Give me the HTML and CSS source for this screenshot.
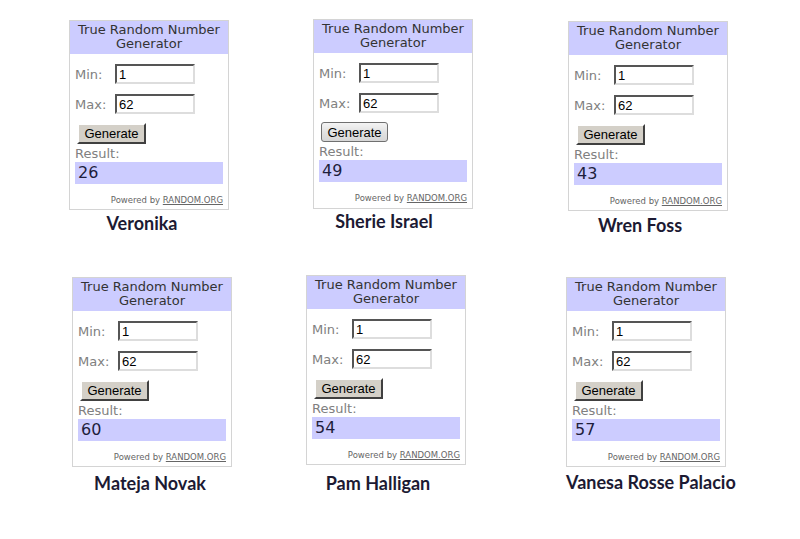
FILE: index.html
```html
<!DOCTYPE html>
<html lang="en">
<head>
    <meta charset="UTF-8">
    <title>Random Number Winners</title>
    <link rel="stylesheet" href="styles.css">
</head>
<body>

    <div class="sheet">
        <div class="row">
            <div class="entry entry-1">
                <div class="rng">
                    <div class="rng-head">True Random Number<br>Generator</div>
                    <div class="rng-body">
                        <div class="field"><span class="lbl">Min:</span><input class="num" type="text" value="1"></div>
                        <div class="field"><span class="lbl">Max:</span><input class="num" type="text" value="62"></div>
                        <button class="gen">Generate</button>
                        <div class="lbl result-lbl">Result:</div>
                        <div class="result">26</div>
                        <div class="powered">Powered by <span class="org">RANDOM.ORG</span></div>
                    </div>
                </div>
                <div class="name">Veronika</div>
            </div>

            <div class="entry entry-2">
                <div class="rng">
                    <div class="rng-head">True Random Number<br>Generator</div>
                    <div class="rng-body">
                        <div class="field"><span class="lbl">Min:</span><input class="num" type="text" value="1"></div>
                        <div class="field"><span class="lbl">Max:</span><input class="num" type="text" value="62"></div>
                        <button class="gen gen-round">Generate</button>
                        <div class="lbl result-lbl">Result:</div>
                        <div class="result">49</div>
                        <div class="powered">Powered by <span class="org">RANDOM.ORG</span></div>
                    </div>
                </div>
                <div class="name">Sherie Israel</div>
            </div>

            <div class="entry entry-3">
                <div class="rng">
                    <div class="rng-head">True Random Number<br>Generator</div>
                    <div class="rng-body">
                        <div class="field"><span class="lbl">Min:</span><input class="num" type="text" value="1"></div>
                        <div class="field"><span class="lbl">Max:</span><input class="num" type="text" value="62"></div>
                        <button class="gen">Generate</button>
                        <div class="lbl result-lbl">Result:</div>
                        <div class="result">43</div>
                        <div class="powered">Powered by <span class="org">RANDOM.ORG</span></div>
                    </div>
                </div>
                <div class="name">Wren Foss</div>
            </div>
        </div>

        <div class="row">
            <div class="entry entry-4">
                <div class="rng">
                    <div class="rng-head">True Random Number<br>Generator</div>
                    <div class="rng-body">
                        <div class="field"><span class="lbl">Min:</span><input class="num" type="text" value="1"></div>
                        <div class="field"><span class="lbl">Max:</span><input class="num" type="text" value="62"></div>
                        <button class="gen">Generate</button>
                        <div class="lbl result-lbl">Result:</div>
                        <div class="result">60</div>
                        <div class="powered">Powered by <span class="org">RANDOM.ORG</span></div>
                    </div>
                </div>
                <div class="name">Mateja Novak</div>
            </div>

            <div class="entry entry-5">
                <div class="rng">
                    <div class="rng-head">True Random Number<br>Generator</div>
                    <div class="rng-body">
                        <div class="field"><span class="lbl">Min:</span><input class="num" type="text" value="1"></div>
                        <div class="field"><span class="lbl">Max:</span><input class="num" type="text" value="62"></div>
                        <button class="gen">Generate</button>
                        <div class="lbl result-lbl">Result:</div>
                        <div class="result">54</div>
                        <div class="powered">Powered by <span class="org">RANDOM.ORG</span></div>
                    </div>
                </div>
                <div class="name">Pam Halligan</div>
            </div>

            <div class="entry entry-6">
                <div class="rng">
                    <div class="rng-head">True Random Number<br>Generator</div>
                    <div class="rng-body">
                        <div class="field"><span class="lbl">Min:</span><input class="num" type="text" value="1"></div>
                        <div class="field"><span class="lbl">Max:</span><input class="num" type="text" value="62"></div>
                        <button class="gen">Generate</button>
                        <div class="lbl result-lbl">Result:</div>
                        <div class="result">57</div>
                        <div class="powered">Powered by <span class="org">RANDOM.ORG</span></div>
                    </div>
                </div>
                <div class="name">Vanesa Rosse Palacio</div>
            </div>
        </div>
    </div>

</body>
</html>
```

FILE: styles.css
```css
body {
    margin: 0;
    background-color: #fff;
    font-family: 'DejaVu Sans', Verdana, sans-serif;
    color: #333;
}

.sheet {
    width: 800px;
    height: 539px;
    overflow: hidden;
}

.row {
    display: flex;
    align-items: flex-start;
    height: 256px;
}

/* each screenshot was pasted by hand, so every entry sits a little differently */
.entry {
    width: 160px;
    margin-left: var(--ml);
    margin-top: var(--mt);
}

.entry-1 { --ml: 69px;  --mt: 20px; --nt: 2px; --nx: -7px; }
.entry-2 { --ml: 84px;  --mt: 19px; --nt: 1px; --nx: -9px; }
.entry-3 { --ml: 95px;  --mt: 21px; --nt: 3px; --nx: -8px; }
.entry-4 { --ml: 72px;  --mt: 21px; --nt: 5px; --nx: -2px; }
.entry-5 { --ml: 74px;  --mt: 19px; --nt: 7px; --nx: -8px; }
.entry-6 { --ml: 100px; --mt: 21px; --nt: 4px; --nx: 0px; }

.rng {
    width: 158px;
    height: 188px;
    border: 1px solid #d4d4d4;
    background-color: #fff;
}

.rng-head {
    background-color: #ccccff;
    text-align: center;
    font-size: 13px;
    line-height: 14px;
    padding: 2px 0 3px;
    color: #333;
}

.rng-body {
    padding: 10px 6px 0 5px;
}

.field {
    display: flex;
    align-items: center;
    height: 20px;
    margin-bottom: 10px;
}

.lbl {
    font-size: 13px;
    color: #808080;
}

.field .lbl {
    width: 40px;
}

.num {
    box-sizing: border-box;
    width: 80px;
    height: 20px;
    margin: 0;
    padding: 1px 2px;
    border: 2px solid;
    border-color: #555 #ddd #ddd #555;
    font-family: 'Liberation Sans', Arial, sans-serif;
    font-size: 13px;
    color: #000;
    background: #fff;
}

.gen {
    display: block;
    box-sizing: border-box;
    width: 69px;
    height: 21px;
    margin: -1px 0 0 2px;
    padding: 0;
    border: 2px solid;
    border-color: #fff #404040 #404040 #fff;
    background-color: #d4d0c8;
    font-family: 'Liberation Sans', Arial, sans-serif;
    font-size: 13px;
    color: #000;
}

.gen-round {
    width: 67px;
    height: 20px;
    border: 1px solid #707070;
    border-radius: 3px;
    background: linear-gradient(#f4f4f4, #e2e2e2 50%, #d6d6d6);
}

.result-lbl {
    margin-top: 2px;
    line-height: 15px;
}

.result {
    width: 145px;
    height: 22px;
    margin-top: 1px;
    padding-left: 3px;
    background-color: #ccccff;
    font-size: 16px;
    line-height: 22px;
    color: #1e1e3c;
}

.powered {
    width: 148px;
    margin-top: 11px;
    text-align: right;
    font-size: 8.5px;
    color: #666;
}

.org {
    text-decoration: underline;
}

.name {
    margin-top: var(--nt);
    transform: translateX(var(--nx));
    text-align: center;
    white-space: nowrap;
    font-family: Lato, 'Open Sans', sans-serif;
    font-weight: bold;
    font-size: 18px;
    color: #1c1a33;
}
```
